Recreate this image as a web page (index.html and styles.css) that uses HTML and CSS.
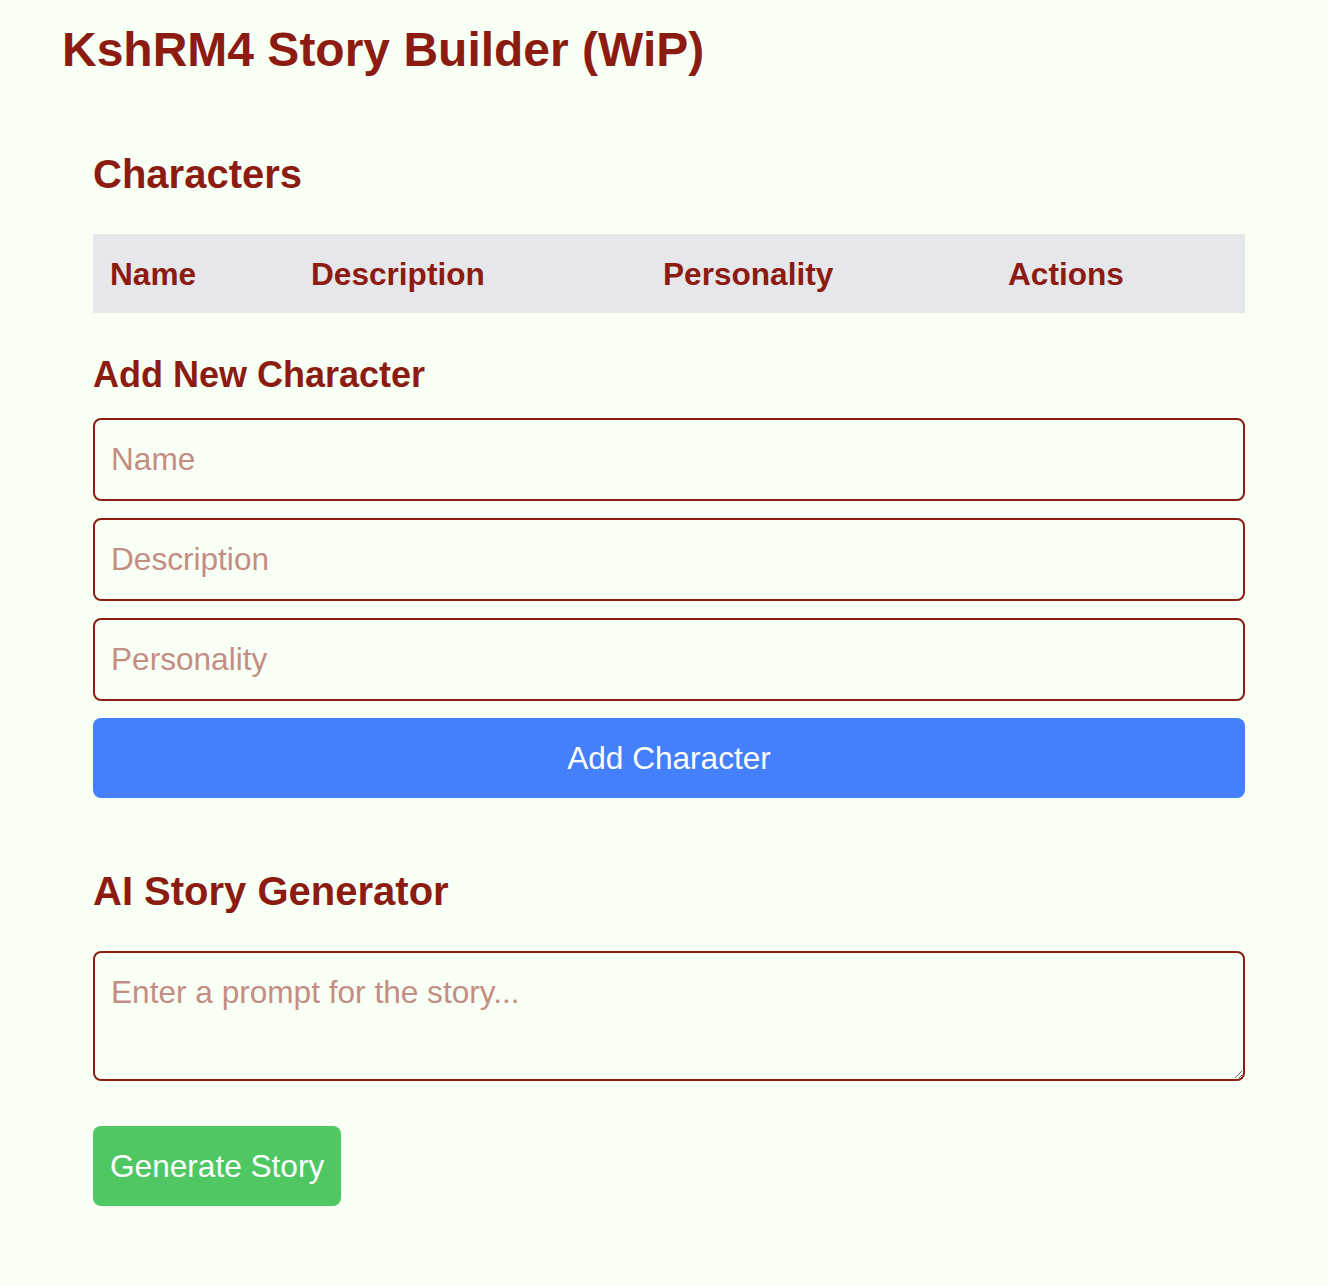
FILE: index.html
```html
<!DOCTYPE html>
<html lang="en">
<head>
<meta charset="utf-8">
<title>KshRM4 Story Builder (WiP)</title>
<link rel="stylesheet" href="styles.css">
</head>
<body>
<div class="app">
  <h1 class="title">KshRM4 Story Builder (WiP)</h1>

  <section class="section characters">
    <h2 class="section-title">Characters</h2>
    <table class="char-table">
      <colgroup>
        <col class="col-name">
        <col class="col-desc">
        <col class="col-pers">
        <col class="col-actions">
      </colgroup>
      <thead>
        <tr>
          <th>Name</th>
          <th>Description</th>
          <th>Personality</th>
          <th>Actions</th>
        </tr>
      </thead>
      <tbody></tbody>
    </table>

    <h3 class="sub-title">Add New Character</h3>
    <form class="char-form">
      <input class="field" type="text" placeholder="Name">
      <input class="field" type="text" placeholder="Description">
      <input class="field" type="text" placeholder="Personality">
      <button class="btn btn-blue" type="button">Add Character</button>
    </form>
  </section>

  <section class="section generator">
    <h2 class="section-title">AI Story Generator</h2>
    <textarea class="field prompt" rows="2" placeholder="Enter a prompt for the story..."></textarea>
    <div class="actions">
      <button class="btn btn-green" type="button">Generate Story</button>
    </div>
  </section>
</div>
</body>
</html>
```

FILE: styles.css
```css
html, body {
  margin: 0;
  padding: 0;
  background: #f8fff4;
}

body {
  font-family: "Liberation Sans", Arial, Helvetica, sans-serif;
  color: #8c1b11;
}

.app {
  padding: 22px 83px 80px 62px;
}

.title {
  margin: 0;
  font-size: 48px;
  line-height: 55px;
  font-weight: bold;
}

.section {
  padding-left: 31px;
}

.characters {
  margin-top: 74px;
}

.section-title {
  margin: 0;
  font-size: 40px;
  line-height: 46px;
  font-weight: bold;
}

.char-table {
  width: 100%;
  margin-top: 37px;
  border-collapse: collapse;
  table-layout: fixed;
}

.col-name { width: 201px; }
.col-desc { width: 352px; }
.col-pers { width: 345px; }

.char-table th {
  background: #e5e7eb;
  text-align: left;
  font-size: 31.6px;
  line-height: 36px;
  font-weight: bold;
  padding: 22px 17px 21px;
}

.sub-title {
  margin: 41px 0 0;
  font-size: 36px;
  line-height: 41px;
  font-weight: bold;
}

.char-form {
  margin-top: 23px;
  display: flex;
  flex-direction: column;
  gap: 17px;
}

.field {
  display: block;
  box-sizing: border-box;
  width: 100%;
  margin: 0;
  padding: 16px;
  border: 2px solid #8c1b11;
  border-radius: 8px;
  background: #f8fff4;
  color: #8c1b11;
  font-family: "Liberation Sans", Arial, Helvetica, sans-serif;
  font-size: 31.6px;
  line-height: 47px;
  outline: none;
}

.field::placeholder {
  color: #c48d84;
  opacity: 1;
}

.btn {
  border: none;
  border-radius: 8px;
  color: #ffffff;
  font-family: "Liberation Sans", Arial, Helvetica, sans-serif;
  font-size: 31.6px;
  line-height: 48px;
  padding: 16px 17px;
  cursor: pointer;
}

.btn-blue {
  display: block;
  width: 100%;
  background: #447ffd;
}

.btn-green {
  background: #4fc763;
}

.generator {
  margin-top: 70px;
}

.prompt {
  margin-top: 37px;
  height: 130px;
  resize: vertical;
}

.actions {
  margin-top: 45px;
}
```
